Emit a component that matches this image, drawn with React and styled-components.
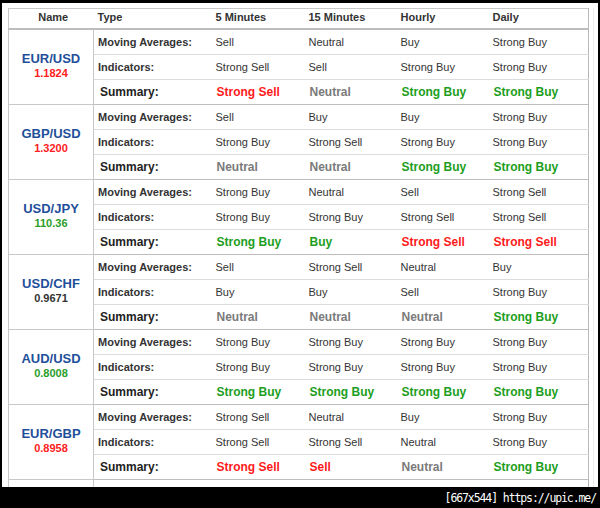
import React from 'react';
import styled, { createGlobalStyle } from 'styled-components';

const GlobalStyle = createGlobalStyle`
  body {
    margin: 0;
    background: #000;
    font-family: Arial, "Liberation Sans", sans-serif;
  }
`;

const Frame = styled.div`
  width: 600px;
  height: 508px;
  padding: 3px 2px 0 2px;
  box-sizing: border-box;
  display: flex;
  flex-direction: column;
  background: #000;
`;

const Panel = styled.div`
  height: 484px;
  background: #fff;
  padding: 5px 0 0 6px;
  overflow: hidden;
  display: flex;
`;

const Scroller = styled.div`
  width: 585px;
  border-right: 1px solid #ececec;
`;

const Table = styled.table`
  width: 580px;
  table-layout: fixed;
  border-collapse: collapse;
  color: #333;
  font-size: 11px;
`;

const HeadCell = styled.th`
  height: 18px;
  padding: 1px 0 0 4px;
  vertical-align: top;
  font-weight: bold;
  font-size: 11px;
  line-height: 14px;
  text-align: ${(p) => (p.center ? 'center' : 'left')};
  border-top: 1px solid #c8c8c8;
  border-bottom: 2px solid #bdbdbd;
  border-left: ${(p) => (p.edge === 'left' ? '1px solid #c8c8c8' : 'none')};
  border-right: ${(p) => (p.edge === 'right' ? '1px solid #b8b8b8' : 'none')};
`;

const NameCell = styled.td`
  text-align: center;
  vertical-align: middle;
  border: 1px solid #c8c8c8;
  border-top-color: #bdbdbd;
  padding: 0 0 4px 0;
`;

const Pair = styled.div`
  font-size: 13px;
  font-weight: bold;
  color: #1f4f9a;
  line-height: 15px;
`;

const Price = styled.div`
  font-size: 11px;
  font-weight: bold;
  line-height: 14px;
  color: ${(p) => p.color};
`;

const Cell = styled.td`
  height: 24px;
  padding: 0 0 0 4px;
  white-space: nowrap;
  overflow: hidden;
  border-bottom: 1px solid ${(p) => (p.last ? '#bdbdbd' : '#dcdcdc')};
  border-right: ${(p) => (p.edge ? '1px solid #b8b8b8' : 'none')};
`;

const Label = styled(Cell)`
  font-weight: bold;
`;

const SummaryLabel = styled(Cell)`
  font-weight: bold;
  font-size: 12px;
  color: #222;
  padding-left: 6px;
`;

const Signal = styled(Cell)`
  font-weight: bold;
  font-size: 12px;
  padding-left: 5px;
  color: ${(p) => p.color};
`;

const Footer = styled.div`
  height: 21px;
  display: flex;
  justify-content: flex-end;
  align-items: center;
  padding-right: 2px;
  color: #fff;
  font-family: "DejaVu Sans Mono", "Liberation Mono", monospace;
  font-size: 11.5px;
  letter-spacing: -1.1px;
`;

const tone = {
  'Strong Sell': '#ff1a1a',
  Sell: '#ff1a1a',
  Neutral: '#7a7a7a',
  Buy: '#1c9e1c',
  'Strong Buy': '#1c9e1c',
};

const priceTone = { red: '#ff2020', green: '#2a9e2a', dark: '#333' };

const pairs = [
  {
    name: 'EUR/USD', price: '1.1824', tone: 'red',
    ma: ['Sell', 'Neutral', 'Buy', 'Strong Buy'],
    ind: ['Strong Sell', 'Sell', 'Strong Buy', 'Strong Buy'],
    sum: ['Strong Sell', 'Neutral', 'Strong Buy', 'Strong Buy'],
  },
  {
    name: 'GBP/USD', price: '1.3200', tone: 'red',
    ma: ['Sell', 'Buy', 'Buy', 'Strong Buy'],
    ind: ['Strong Buy', 'Strong Sell', 'Strong Buy', 'Strong Buy'],
    sum: ['Neutral', 'Neutral', 'Strong Buy', 'Strong Buy'],
  },
  {
    name: 'USD/JPY', price: '110.36', tone: 'green',
    ma: ['Strong Buy', 'Neutral', 'Sell', 'Strong Sell'],
    ind: ['Strong Buy', 'Strong Buy', 'Strong Sell', 'Strong Sell'],
    sum: ['Strong Buy', 'Buy', 'Strong Sell', 'Strong Sell'],
  },
  {
    name: 'USD/CHF', price: '0.9671', tone: 'dark',
    ma: ['Sell', 'Strong Sell', 'Neutral', 'Buy'],
    ind: ['Buy', 'Buy', 'Sell', 'Strong Buy'],
    sum: ['Neutral', 'Neutral', 'Neutral', 'Strong Buy'],
  },
  {
    name: 'AUD/USD', price: '0.8008', tone: 'green',
    ma: ['Strong Buy', 'Strong Buy', 'Strong Buy', 'Strong Buy'],
    ind: ['Strong Buy', 'Strong Buy', 'Strong Buy', 'Strong Buy'],
    sum: ['Strong Buy', 'Strong Buy', 'Strong Buy', 'Strong Buy'],
  },
  {
    name: 'EUR/GBP', price: '0.8958', tone: 'red',
    ma: ['Strong Sell', 'Neutral', 'Buy', 'Strong Buy'],
    ind: ['Strong Sell', 'Strong Sell', 'Neutral', 'Strong Buy'],
    sum: ['Strong Sell', 'Sell', 'Neutral', 'Strong Buy'],
  },
  {
    name: 'USD/CAD', price: '1.2541', tone: 'red',
    ma: ['Buy', 'Buy', 'Strong Buy', 'Sell'],
    ind: ['Buy', 'Strong Buy', 'Strong Buy', 'Sell'],
    sum: ['Buy', 'Strong Buy', 'Strong Buy', 'Sell'],
  },
];

const PairRows = ({ pair }) => (
  <>
    <tr>
      <NameCell rowSpan={3}>
        <Pair>{pair.name}</Pair>
        <Price color={priceTone[pair.tone]}>{pair.price}</Price>
      </NameCell>
      <Label>Moving Averages:</Label>
      {pair.ma.map((v, i) => (
        <Cell key={i} edge={i === 3}>{v}</Cell>
      ))}
    </tr>
    <tr>
      <Label>Indicators:</Label>
      {pair.ind.map((v, i) => (
        <Cell key={i} edge={i === 3}>{v}</Cell>
      ))}
    </tr>
    <tr>
      <SummaryLabel last>Summary:</SummaryLabel>
      {pair.sum.map((v, i) => (
        <Signal key={i} last edge={i === 3} color={tone[v]}>{v}</Signal>
      ))}
    </tr>
  </>
);

export default function App() {
  return (
    <>
      <GlobalStyle />
      <Frame>
        <Panel>
          <Scroller>
            <Table>
              <colgroup>
                <col style={{ width: 85 }} />
                <col style={{ width: 118 }} />
                <col style={{ width: 93 }} />
                <col style={{ width: 92 }} />
                <col style={{ width: 92 }} />
                <col style={{ width: 100 }} />
              </colgroup>
              <thead>
                <tr>
                  <HeadCell center edge="left">Name</HeadCell>
                  <HeadCell>Type</HeadCell>
                  <HeadCell>5 Minutes</HeadCell>
                  <HeadCell>15 Minutes</HeadCell>
                  <HeadCell>Hourly</HeadCell>
                  <HeadCell edge="right">Daily</HeadCell>
                </tr>
              </thead>
              <tbody>
                {pairs.map((p) => (
                  <PairRows key={p.name} pair={p} />
                ))}
              </tbody>
            </Table>
          </Scroller>
        </Panel>
        <Footer>[667x544] https://upic.me/</Footer>
      </Frame>
    </>
  );
}
